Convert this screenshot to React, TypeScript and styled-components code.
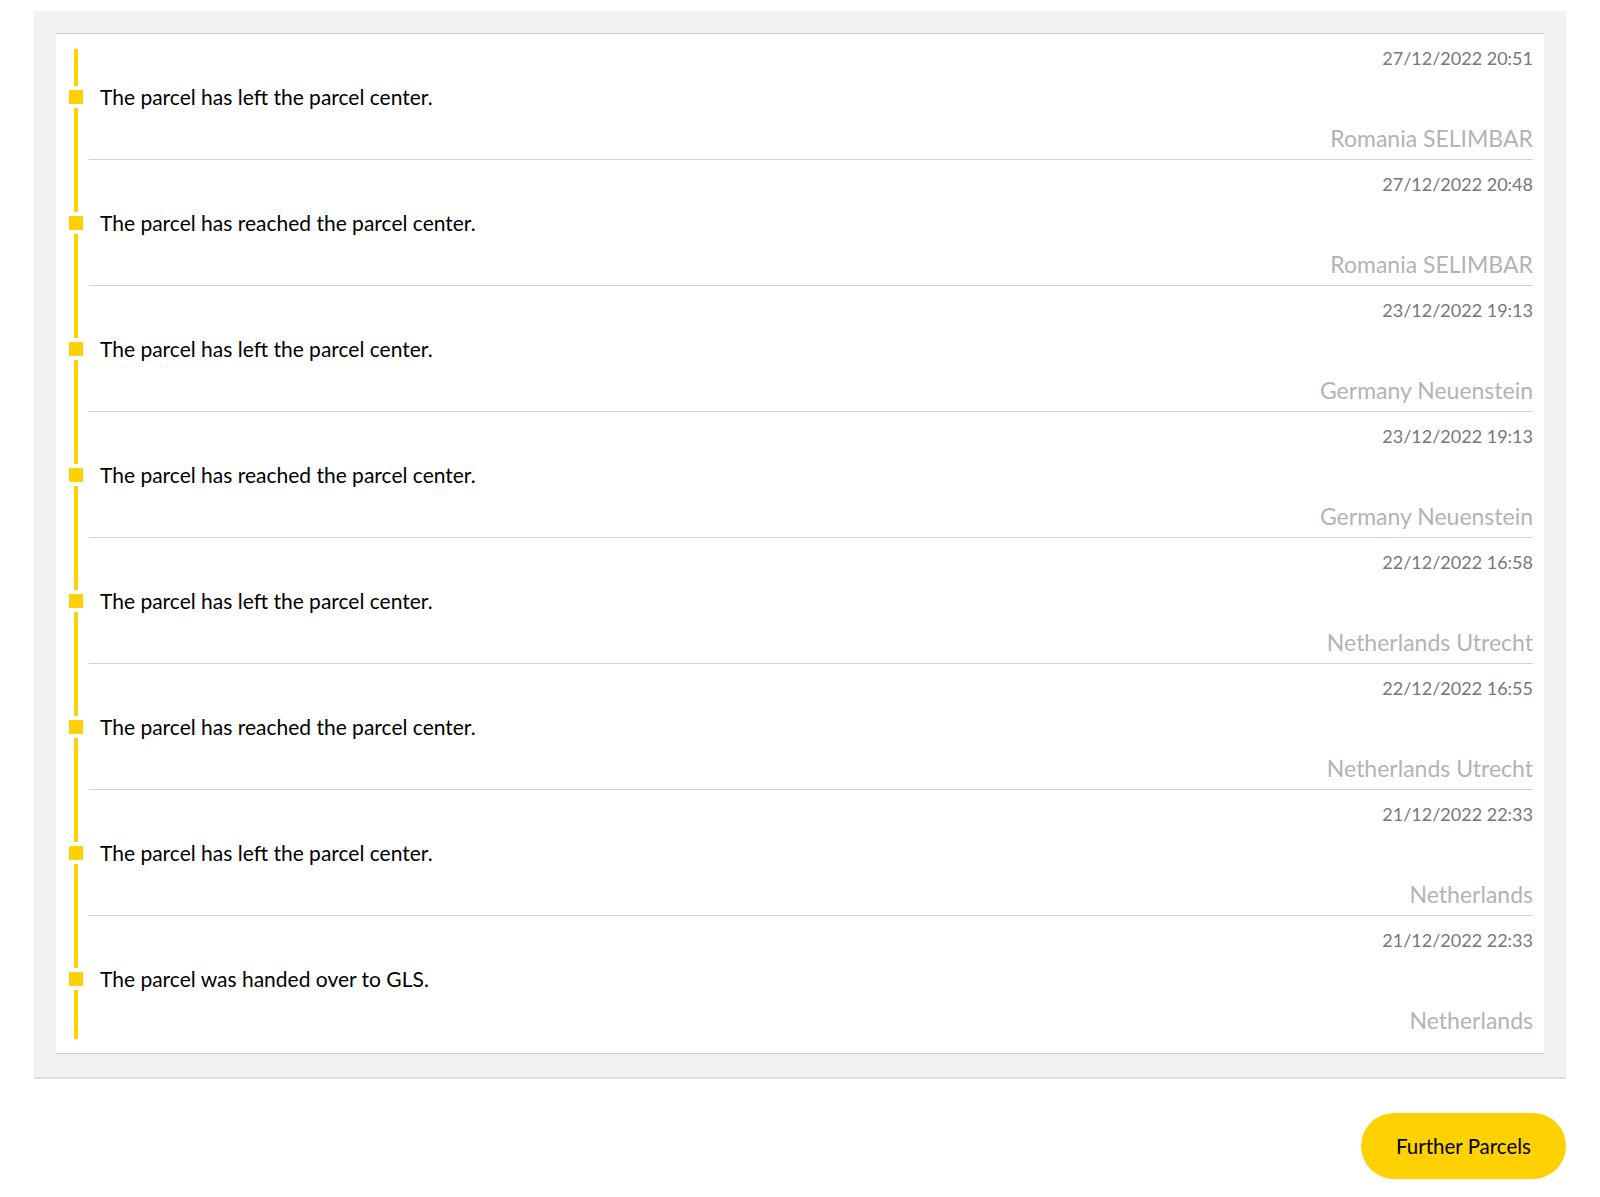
import styled, { createGlobalStyle } from 'styled-components';

interface ITrackingEvent {
  date: string,
  message: string,
  location: string
}

const events: ITrackingEvent[] = [
  { date: '27/12/2022 20:51', message: 'The parcel has left the parcel center.', location: 'Romania SELIMBAR' },
  { date: '27/12/2022 20:48', message: 'The parcel has reached the parcel center.', location: 'Romania SELIMBAR' },
  { date: '23/12/2022 19:13', message: 'The parcel has left the parcel center.', location: 'Germany Neuenstein' },
  { date: '23/12/2022 19:13', message: 'The parcel has reached the parcel center.', location: 'Germany Neuenstein' },
  { date: '22/12/2022 16:58', message: 'The parcel has left the parcel center.', location: 'Netherlands Utrecht' },
  { date: '22/12/2022 16:55', message: 'The parcel has reached the parcel center.', location: 'Netherlands Utrecht' },
  { date: '21/12/2022 22:33', message: 'The parcel has left the parcel center.', location: 'Netherlands' },
  { date: '21/12/2022 22:33', message: 'The parcel was handed over to GLS.', location: 'Netherlands' },
];

const GlobalStyle = createGlobalStyle`
  body {
    margin: 0;
    background: #ffffff;
    font-family: Lato, "Open Sans", sans-serif;
    color: #000000;
  }
`;

const Page = styled.div`
  padding: 11px 34px 18px;
`;
const Panel = styled.section`
  background-color: #f2f2f2;
  padding: 22px 22px 23px;
  border-bottom: 2px solid #dedede;
`;
const Card = styled.ul`
  position: relative;
  list-style: none;
  margin: 0;
  padding: 0 11px 12px 0;
  background-color: #ffffff;
  border-top: 1px solid #d0d0d0;
  border-bottom: 1px solid #d0d0d0;
  &::before {
    content: '';
    position: absolute;
    left: 18px;
    top: 15px;
    bottom: 14px;
    width: 4px;
    background-color: #ffd100;
  }
`;
const Row = styled.li`
  display: flex;
`;
const MarkerCol = styled.div`
  width: 33px;
  flex-shrink: 0;
  display: flex;
  align-items: center;
`;
const Marker = styled.span`
  position: relative;
  margin-left: 13px;
  width: 14px;
  height: 14px;
  background-color: #ffd100;
  box-shadow: 0 0 0 4px #ffffff;
`;
const Body = styled.div<{ $last?: boolean }>`
  flex: 1;
  display: flex;
  flex-direction: column;
  padding: 12px 0 7px;
  border-bottom: ${(p) => (p.$last ? 'none' : '1px solid #d2d2d2')};
`;
const Date = styled.div`
  text-align: right;
  font-size: 18px;
  line-height: 24px;
  color: #777777;
`;
const Message = styled.div`
  margin-top: 13px;
  padding-left: 11px;
  font-size: 21px;
  line-height: 28px;
  color: #000000;
`;
const Location = styled.div`
  margin-top: 13px;
  text-align: right;
  font-size: 23px;
  line-height: 28px;
  color: #b3b3b3;
`;
const Footer = styled.div`
  display: flex;
  justify-content: flex-end;
  padding-top: 34px;
`;
const Button = styled.button`
  height: 66px;
  padding: 0 35px;
  border: none;
  border-radius: 33px;
  background-color: #ffd100;
  font-family: inherit;
  font-size: 20.5px;
  color: #000000;
  cursor: pointer;
`;

function App() {
  return (
    <Page>
      <GlobalStyle />
      <Panel>
        <Card>
          {events.map((ev, i) => (
            <Row key={i}>
              <MarkerCol>
                <Marker />
              </MarkerCol>
              <Body $last={i === events.length - 1}>
                <Date>{ev.date}</Date>
                <Message>{ev.message}</Message>
                <Location>{ev.location}</Location>
              </Body>
            </Row>
          ))}
        </Card>
      </Panel>
      <Footer>
        <Button>Further Parcels</Button>
      </Footer>
    </Page>
  );
}

export default App;
